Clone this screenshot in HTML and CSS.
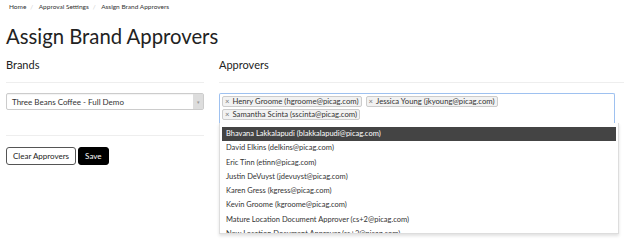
FILE: index.html
```html
<!DOCTYPE html>
<html>
<head>
    <title>Assign Brand Approvers</title>
    <link rel="stylesheet" href="styles.css">
</head>
<body>
    <div class="breadcrumb">
        <span>Home</span><span class="sep">/</span>
        <span>Approval Settings</span><span class="sep">/</span>
        <span>Assign Brand Approvers</span>
    </div>

    <h1>Assign Brand Approvers</h1>

    <div class="row">
        <div class="col-brands">
            <h4>Brands</h4>
            <hr>
            <div class="select">
                <span>Three Beans Coffee - Full Demo</span>
                <span class="arrow">&#9662;</span>
            </div>
            <hr class="form-end">
            <div class="actions">
                <button class="btn-clear">Clear Approvers</button>
                <button class="btn-save">Save</button>
            </div>
        </div>

        <div class="col-approvers">
            <h4>Approvers</h4>
            <hr>
            <div class="multi">
                <div class="tags">
                    <span class="tag"><span class="x">&times;</span>Henry Groome (hgroome@picag.com)</span>
                    <span class="tag"><span class="x">&times;</span>Jessica Young (jkyoung@picag.com)</span>
                    <span class="tag"><span class="x">&times;</span>Samantha Scinta (sscinta@picag.com)</span>
                </div>
                <ul class="dropdown">
                    <li class="active">Bhavana Lakkalapudi (blakkalapudi@picag.com)</li>
                    <li>David Elkins (delkins@picag.com)</li>
                    <li>Eric Tinn (etinn@picag.com)</li>
                    <li>Justin DeVuyst (jdevuyst@picag.com)</li>
                    <li>Karen Gress (kgress@picag.com)</li>
                    <li>Kevin Groome (kgroome@picag.com)</li>
                    <li>Mature Location Document Approver (cs+2@picag.com)</li>
                    <li>New Location Document Approver (cs+3@picag.com)</li>
                </ul>
            </div>
        </div>
    </div>
</body>
</html>
```

FILE: styles.css
```css
html, body {
    height: 100%;
}
body {
    margin: 0;
    padding: 0 0 0 6px;
    font-family: "Lato", "Open Sans", sans-serif;
    color: #222;
    background: #fff;
}
.breadcrumb {
    font-size: 6.5px;
    color: #333;
    padding: 3px 0 0 3px;
    height: 10px;
}
.breadcrumb .sep {
    color: #ccc;
    margin: 0 4px;
}
h1 {
    font-size: 20.3px;
    font-weight: 400;
    margin: 11px 0 0 0;
    line-height: 24px;
}
.row {
    display: flex;
    gap: 15px;
    margin-top: 10px;
}
.col-brands {
    width: 198px;
}
.col-approvers {
    flex: 1;
}
h4 {
    font-size: 11px;
    font-weight: 400;
    margin: 0;
    line-height: 14px;
}
hr {
    border: none;
    border-top: 1px solid #eee;
    margin: 10px 0 10px 0;
}
.select {
    height: 15px;
    border: 1px solid #ccc;
    border-radius: 2px;
    display: flex;
    align-items: center;
    justify-content: space-between;
    font-size: 8px;
    padding-left: 5px;
    color: #333;
    box-shadow: inset 0 1px 1px rgba(0,0,0,0.05);
}
.select .arrow {
    width: 10px;
    height: 100%;
    background: #ddd;
    color: #999;
    font-size: 5px;
    display: flex;
    align-items: center;
    justify-content: center;
}
.form-end {
    margin: 25px 0 11px 0;
}
.actions {
    display: flex;
    gap: 2px;
}
.actions button {
    font-family: inherit;
    font-size: 8px;
    height: 18px;
    border-radius: 3px;
    padding: 0 6px;
}
.btn-clear {
    background: #fff;
    border: 1px solid #555;
    color: #222;
}
.btn-save {
    background: #000;
    border: 1px solid #000;
    color: #fff;
}
.multi {
    position: relative;
    width: 394px;
    border: 1px solid #9ec1f0;
    border-bottom: none;
    border-radius: 2px 2px 0 0;
}
.tags {
    display: flex;
    flex-wrap: wrap;
    gap: 2px 4px;
    padding: 2px 2px 3px 2px;
}
.tag {
    font-size: 7.7px;
    line-height: 9px;
    background: #f2f2f2;
    border: 1px solid #ccc;
    border-radius: 2px;
    padding: 0 2px;
    color: #333;
}
.tag .x {
    color: #777;
    margin-right: 3px;
}
.dropdown {
    position: absolute;
    left: -1px;
    top: 100%;
    z-index: 10;
    width: 394px;
    height: 106px;
    overflow: hidden;
    list-style: none;
    margin: 0;
    padding: 4px 2px 0 2px;
    background: #fff;
    border: 1px solid #ddd;
    border-top: none;
    box-shadow: 0 2px 3px rgba(0,0,0,0.12);
}
.dropdown li {
    font-size: 7.5px;
    height: 14.3px;
    line-height: 14.3px;
    padding-left: 4px;
    color: #333;
}
.dropdown li.active {
    background: #444;
    color: #fff;
}
```
